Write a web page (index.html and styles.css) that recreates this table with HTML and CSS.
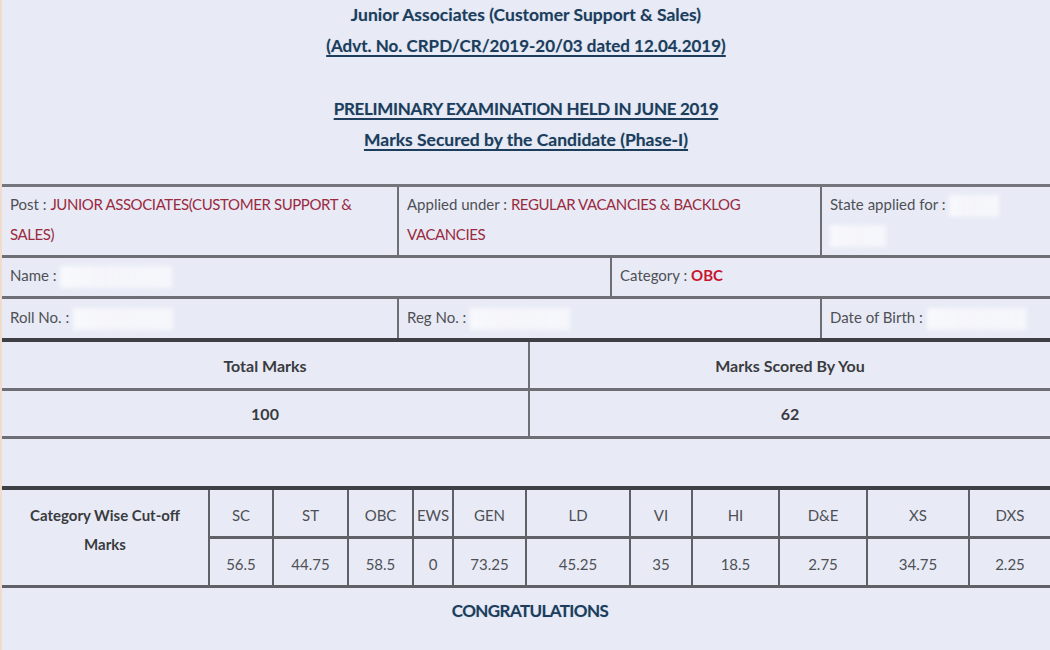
FILE: index.html
```html
<!DOCTYPE html>
<html lang="en">
<head>
<meta charset="utf-8">
<title>Marks Secured by the Candidate</title>
<link rel="stylesheet" href="styles.css">
</head>
<body>
<div class="page">
  <header class="titles">
    <div class="t1">Junior Associates (Customer Support &amp; Sales)</div>
    <div class="t2"><u>(Advt. No. CRPD/CR/2019-20/03 dated 12.04.2019)</u></div>
    <div class="t3"><u>PRELIMINARY EXAMINATION HELD IN JUNE 2019</u></div>
    <div class="t4"><u>Marks Secured by the Candidate (Phase-I)</u></div>
  </header>

  <section class="info">
    <div class="cell c-post"><span class="lbl">Post :</span> <span class="val">JUNIOR ASSOCIATES(CUSTOMER SUPPORT &amp; SALES)</span></div>
    <div class="cell c-applied"><span class="lbl">Applied under :</span> <span class="val">REGULAR VACANCIES &amp; BACKLOG VACANCIES</span></div>
    <div class="cell c-state"><span class="lbl">State applied for :</span> <span class="blur b-state1"></span><br><span class="blur b-state2"></span></div>
    <div class="cell c-name"><span class="lbl">Name :</span> <span class="blur b-name"></span></div>
    <div class="cell c-cat"><span class="lbl">Category :</span> <span class="val strong">OBC</span></div>
    <div class="cell c-roll"><span class="lbl">Roll No. :</span> <span class="blur b-roll"></span></div>
    <div class="cell c-reg"><span class="lbl">Reg No. :</span> <span class="blur b-reg"></span></div>
    <div class="cell c-dob"><span class="lbl">Date of Birth :</span> <span class="blur b-dob"></span></div>
  </section>

  <section class="marks">
    <div class="mcell head">Total Marks</div>
    <div class="mcell head">Marks Scored By You</div>
    <div class="mcell num">100</div>
    <div class="mcell num">62</div>
    <div class="mcell empty"></div>
  </section>

  <section class="cutoff">
    <div class="ccell ctitle">Category Wise Cut-off<br>Marks</div>
    <div class="ccell">SC</div>
    <div class="ccell">ST</div>
    <div class="ccell">OBC</div>
    <div class="ccell">EWS</div>
    <div class="ccell">GEN</div>
    <div class="ccell">LD</div>
    <div class="ccell">VI</div>
    <div class="ccell">HI</div>
    <div class="ccell">D&amp;E</div>
    <div class="ccell">XS</div>
    <div class="ccell">DXS</div>
    <div class="ccell v">56.5</div>
    <div class="ccell v">44.75</div>
    <div class="ccell v">58.5</div>
    <div class="ccell v">0</div>
    <div class="ccell v">73.25</div>
    <div class="ccell v">45.25</div>
    <div class="ccell v">35</div>
    <div class="ccell v">18.5</div>
    <div class="ccell v">2.75</div>
    <div class="ccell v">34.75</div>
    <div class="ccell v">2.25</div>
  </section>

  <div class="congrats">CONGRATULATIONS</div>
</div>
</body>
</html>
```

FILE: styles.css
```css
html, body {
  margin: 0;
  padding: 0;
  background: #e8ebf6;
}
body {
  font-family: Lato, "Open Sans", "Liberation Sans", sans-serif;
  width: 1050px;
  height: 650px;
  overflow: hidden;
}
.page {
  border-left: 2px solid #efdccb;
  min-height: 650px;
  box-sizing: border-box;
}

/* Titles */
.titles {
  text-align: center;
  color: #1d3d5c;
  font-weight: bold;
  font-size: 17px;
  text-shadow: 0 0 1px rgba(60, 110, 140, 0.35);
}
.titles u {
  text-decoration-thickness: 2px;
  text-underline-offset: 3px;
}
.t1 { height: 30px; line-height: 30px; font-size: 17.5px; }
.t2 { height: 31px; line-height: 31px; }
.t3 { height: 31px; line-height: 31px; margin-top: 32px; letter-spacing: -0.3px; }
.t4 { height: 31px; line-height: 31px; font-size: 17.5px; }

/* Candidate info */
.info {
  margin-top: 29px;
  display: grid;
  grid-template-columns: 395px 211px 208px 240px;
  grid-template-rows: 68px 38px 39px;
  column-gap: 2px;
  row-gap: 3px;
  background: #6d6f75;
  border-top: 3px solid #74767c;
  border-bottom: 4px solid #3e3f44;
  font-size: 15px;
  color: #4a4a4e;
}
.cell {
  background: #e8ebf6;
  padding: 2px 8px 0;
  line-height: 30px;
}
.c-post { grid-column: 1; }
.c-applied { grid-column: 2 / span 2; }
.c-state { grid-column: 4; }
.c-name { grid-column: 1 / span 2; }
.c-cat { grid-column: 3 / span 2; }
.c-roll { grid-column: 1; padding-top: 3px; }
.c-reg { grid-column: 2 / span 2; padding-top: 3px; }
.c-dob { grid-column: 4; padding-top: 3px; }
.lbl { color: #4f5055; }
.val { color: #9a2a3e; letter-spacing: -0.4px; }
.val.strong { color: #c8142e; font-weight: bold; letter-spacing: 0; }
.blur {
  display: inline-block;
  vertical-align: middle;
  height: 22px;
  background: linear-gradient(90deg, rgba(255,255,255,0.7), rgba(245,245,250,0.95) 40%, rgba(255,255,255,0.6));
  filter: blur(2px);
}
.b-name { width: 112px; }
.b-roll { width: 100px; }
.b-reg { width: 100px; }
.b-dob { width: 100px; }
.b-state1 { width: 50px; }
.b-state2 { width: 56px; }

/* Marks */
.marks {
  display: grid;
  grid-template-columns: 526px 1fr;
  grid-template-rows: 46px 45px 47px;
  column-gap: 2px;
  row-gap: 3px;
  background: #6d6f75;
  border-bottom: 4px solid #3e3f44;
  font-weight: bold;
  font-size: 16px;
  color: #3a3b40;
}
.mcell {
  background: #e8ebf6;
  display: flex;
  align-items: center;
  justify-content: center;
}
.mcell.empty { grid-column: 1 / span 2; }

/* Cut-off table */
.cutoff {
  display: grid;
  grid-template-columns: 206px 62px 73px 63px 38px 71px 102px 60px 85px 86px 100px 1fr;
  grid-template-rows: 46px 46px;
  column-gap: 2px;
  row-gap: 3px;
  background: #5f6166;
  border-bottom: 3px solid #5f6166;
  font-size: 15px;
  color: #4f5055;
}
.ccell {
  background: #e8ebf6;
  display: flex;
  align-items: center;
  justify-content: center;
  text-align: center;
  padding-top: 3px;
  box-sizing: border-box;
}
.ccell.ctitle {
  grid-row: 1 / span 2;
  align-items: flex-start;
  padding-top: 11px;
  line-height: 29px;
  font-weight: bold;
  color: #3a3b40;
}

.congrats {
  text-align: center;
  font-weight: bold;
  font-size: 17px;
  letter-spacing: -0.6px;
  color: #1d3d5c;
  margin-top: 12px;
  padding-left: 8px;
  text-shadow: 0 0 1px rgba(60, 110, 140, 0.35);
}
```
